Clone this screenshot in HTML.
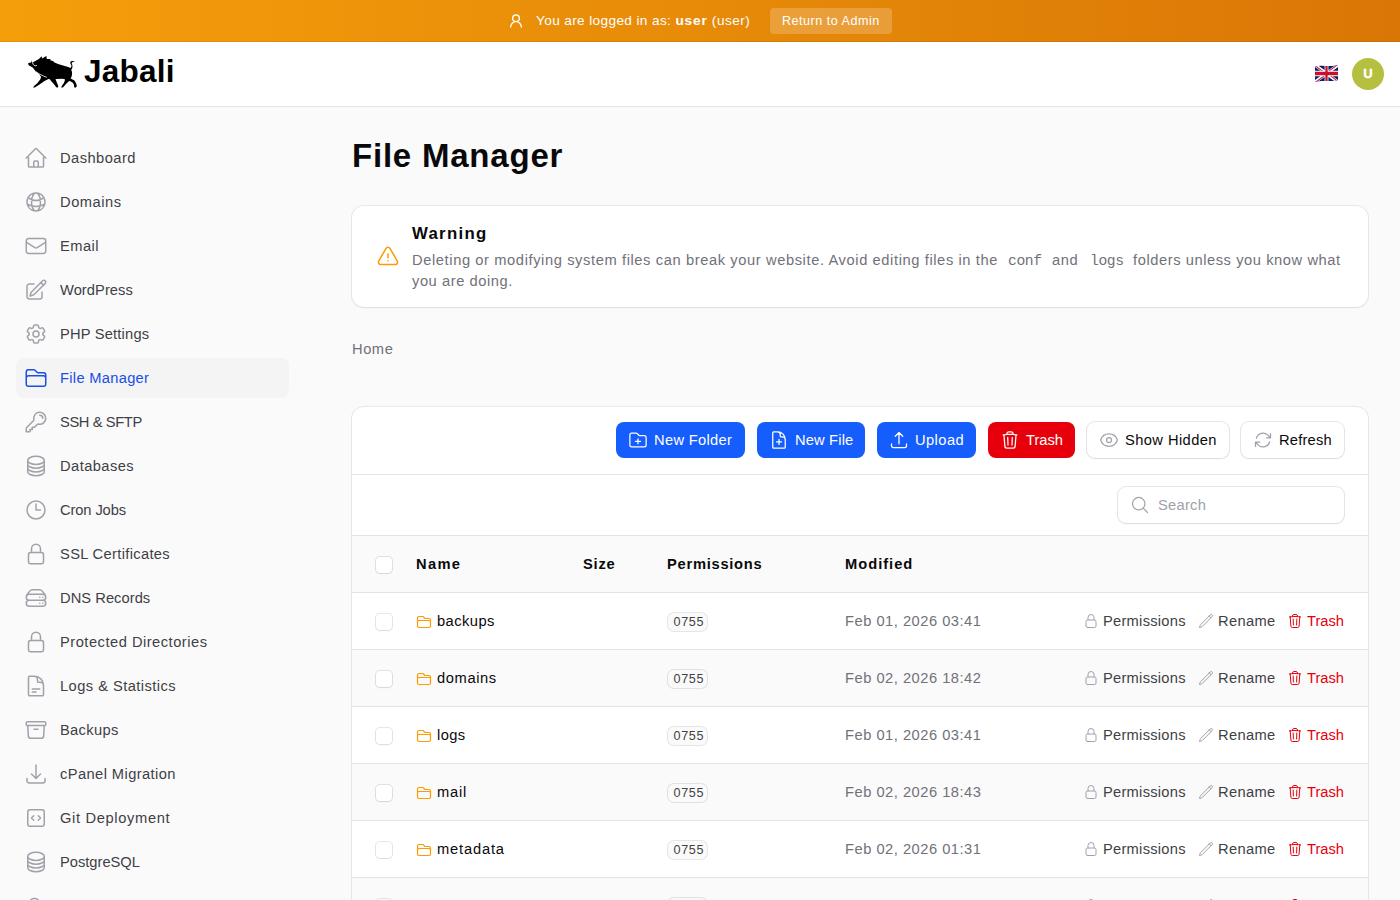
<!DOCTYPE html><html><head><meta charset="utf-8"><style>
html,body{margin:0;padding:0;width:1400px;height:900px;overflow:hidden;background:#fafafa;}
body{position:relative;font-family:"Liberation Sans",sans-serif;}
.fs{font-family:"Liberation Sans",sans-serif;}
.fm{font-family:"Liberation Mono",monospace;}
.t{position:absolute;white-space:pre;}
.ic{position:absolute;display:block;overflow:visible;}
.abs{position:absolute;box-sizing:border-box;}
</style></head><body>
<div class="abs" style="left:0;top:0;width:1400px;height:42px;background:linear-gradient(90deg,#f59e0b,#d97706);box-shadow:inset 0 -1px 0 rgba(0,0,0,.07)"></div>
<svg class="ic" style="left:508px;top:13px;width:16px;height:16px" viewBox="0 0 24 24" fill="none" stroke="#fff" stroke-width="2" stroke-linecap="round" stroke-linejoin="round"><path d="M20 21a8 8 0 0 0-16 0M17 8a5 5 0 1 1-10 0 5 5 0 0 1 10 0Z"/></svg>
<div class="t" style="left:536px;top:10px;line-height:20px;color:#fff;"><span class="fs" style="font-size:13.65px;letter-spacing:0.360px;">You are logged in as: </span><span class="fs" style="font-size:13.65px;letter-spacing:0.852px;font-weight:700;">user</span><span class="fs" style="font-size:13.65px;letter-spacing:0.460px;"> (user)</span></div>
<div class="abs" style="left:770px;top:8px;width:122px;height:26px;border-radius:4px;background:rgba(255,255,255,.2)"></div>
<div class="t" style="left:782px;top:10px;line-height:20px;color:#fff;"><span class="fs" style="font-size:12.60px;letter-spacing:0.496px;">Return to Admin</span></div>
<div class="abs" style="left:0;top:42px;width:1400px;height:65px;background:#fff;border-bottom:1px solid #e4e4e7"></div>
<svg class="ic" style="left:26px;top:52px;width:54px;height:40px" viewBox="0 0 54 40"><path d="M2.0,11.6 L2.7,10.9 L5.0,10.5 L5.3,8.2 L6.0,11.0 L7.1,10.2 L11.1,8.0 L12.9,7.1 L15.6,4.2 L16.0,6.5 L20.4,4.0 L20.8,7.0 L24.9,7.1 L23.8,8.0 L28,9.5 L27.5,10 L32,12 L42.2,15.1 L44.4,16.0 C45.5,15 45.8,14 45.0,12.5 C43.5,10.5 44.5,9 46.5,9 L48.9,9.3 L46.5,10.2 C45.3,10.3 45.8,11.5 46.3,13 C46.7,14.5 46.5,16.5 45.2,17.8 L46,20 C46.3,23 45.5,25.5 44.6,26.5 L48.5,28.5 L50.2,31.5 L50.9,34.2 L49.5,35.8 L48.2,35.2 L47.9,32.5 L46.5,30.5 L43.8,29 L42.5,29.5 L39.5,32.5 L37.2,35.2 L35.6,35.8 L35.4,34.6 L37.6,31.5 L38.8,28.8 L38.9,27.2 L36.5,26.7 L30.5,26.9 L29.5,27 L31,31 L32.4,34.2 L31.5,35.8 L30.3,35.3 L28.2,32.5 L25.6,29.5 L23.8,27.2 L22.4,27 L18.5,29 L13.5,32.5 L9.2,35.3 L7.3,35.8 L7.6,34.6 L11.5,31 L14.2,27.5 L15.1,24.9 L13.3,22.2 L9.8,19.6 L6.7,15.6 L2.7,13.3 Z" fill="#000"/><path d="M6.6,10.8 C7.3,13.4 8.8,14.3 10.8,13.4" stroke="#fff" stroke-width="0.9" fill="none"/><path d="M10.2,19.8 C13,22 16,23.5 20.8,25.4" stroke="#fff" stroke-width="0.8" fill="none"/></svg>
<div class="t" style="left:84px;top:53px;line-height:36px;color:#000;"><span class="fs" style="font-size:31.50px;letter-spacing:0.232px;font-weight:700;">Jabali</span></div>
<svg class="ic" style="left:1315px;top:65px;width:23px;height:17px" viewBox="0 0 60 30" preserveAspectRatio="none">
<clipPath id="fc"><path d="M0,3 C18,-1.5 38,4.5 60,0 L60,26.5 C40,31 22,25.5 0,30 Z"/></clipPath><clipPath id="ft"><path d="M30,15 h30 v15 z v15 h-30 z h-30 v-15 z v-15 h30 z"/></clipPath>
<g clip-path="url(#fc)"><path d="M0,0 v30 h60 v-30 z" fill="#012169"/><path d="M0,0 L60,30 M60,0 L0,30" stroke="#fff" stroke-width="6"/>
<path d="M0,0 L60,30 M60,0 L0,30" clip-path="url(#ft)" stroke="#C8102E" stroke-width="4"/><path d="M30,0 v30 M0,15 h60" stroke="#fff" stroke-width="10"/>
<path d="M30,0 v30 M0,15 h60" stroke="#C8102E" stroke-width="6"/></g></svg>
<div class="abs" style="left:1352px;top:58px;width:32px;height:32px;border-radius:50%;background:#b5bf40"></div>
<div class="t" style="left:1352px;top:63px;line-height:20px;color:#fff;width:32px;text-align:center"><span class="fs" style="font-size:13.00px;letter-spacing:0.359px;font-weight:700;-webkit-text-stroke:0.4px #fff;letter-spacing:0">U</span></div>
<svg class="ic" style="left:24px;top:146px;width:24px;height:24px" viewBox="0 0 24 24" fill="none" stroke="#a1a1aa" stroke-width="1.5" stroke-linecap="round" stroke-linejoin="round"><path d="m2.25 12 8.954-8.955c.44-.439 1.152-.439 1.591 0L21.75 12M4.5 9.75v10.125c0 .621.504 1.125 1.125 1.125H9.75v-4.875c0-.621.504-1.125 1.125-1.125h2.25c.621 0 1.125.504 1.125 1.125V21h4.125c.621 0 1.125-.504 1.125-1.125V9.75M8.25 21h8.25"/></svg>
<div class="t" style="left:60px;top:148px;line-height:20px;color:#3f3f46;"><span class="fs" style="font-size:14.70px;letter-spacing:0.457px;">Dashboard</span></div>
<svg class="ic" style="left:24px;top:190px;width:24px;height:24px" viewBox="0 0 24 24" fill="none" stroke="#a1a1aa" stroke-width="1.5" stroke-linecap="round" stroke-linejoin="round"><path d="M12 21a9.004 9.004 0 0 0 8.716-6.747M12 21a9.004 9.004 0 0 1-8.716-6.747M12 21c2.485 0 4.5-4.03 4.5-9S14.485 3 12 3m0 18c-2.485 0-4.5-4.03-4.5-9S9.515 3 12 3m0 0a8.997 8.997 0 0 1 7.843 4.582M12 3a8.997 8.997 0 0 0-7.843 4.582m15.686 0A11.953 11.953 0 0 1 12 10.5c-2.998 0-5.74-1.1-7.843-2.918m15.686 0A8.959 8.959 0 0 1 21 12c0 .778-.099 1.533-.284 2.253m0 0A17.919 17.919 0 0 1 12 16.5c-3.162 0-6.133-.815-8.716-2.247m0 0A9.015 9.015 0 0 1 3 12c0-1.605.42-3.113 1.157-4.418"/></svg>
<div class="t" style="left:60px;top:192px;line-height:20px;color:#3f3f46;"><span class="fs" style="font-size:14.70px;letter-spacing:0.522px;">Domains</span></div>
<svg class="ic" style="left:24px;top:234px;width:24px;height:24px" viewBox="0 0 24 24" fill="none" stroke="#a1a1aa" stroke-width="1.5" stroke-linecap="round" stroke-linejoin="round"><path d="M21.75 6.75v10.5a2.25 2.25 0 0 1-2.25 2.25h-15a2.25 2.25 0 0 1-2.25-2.25V6.75m19.5 0A2.25 2.25 0 0 0 19.5 4.5h-15a2.25 2.25 0 0 0-2.25 2.25m19.5 0v.243a2.25 2.25 0 0 1-1.07 1.916l-7.5 4.615a2.25 2.25 0 0 1-2.36 0L3.32 8.91a2.25 2.25 0 0 1-1.07-1.916V6.75"/></svg>
<div class="t" style="left:60px;top:236px;line-height:20px;color:#3f3f46;"><span class="fs" style="font-size:14.70px;letter-spacing:0.422px;">Email</span></div>
<svg class="ic" style="left:24px;top:278px;width:24px;height:24px" viewBox="0 0 24 24" fill="none" stroke="#a1a1aa" stroke-width="1.5" stroke-linecap="round" stroke-linejoin="round"><path d="m16.862 4.487 1.687-1.688a1.875 1.875 0 1 1 2.652 2.652L10.582 16.07a4.5 4.5 0 0 1-1.897 1.13L6 18l.8-2.685a4.5 4.5 0 0 1 1.13-1.897l8.932-8.931Zm0 0L19.5 7.125M18 14v4.75A2.25 2.25 0 0 1 15.75 21H5.25A2.25 2.25 0 0 1 3 18.75V8.25A2.25 2.25 0 0 1 5.25 6H10"/></svg>
<div class="t" style="left:60px;top:280px;line-height:20px;color:#3f3f46;"><span class="fs" style="font-size:14.70px;letter-spacing:0.052px;">WordPress</span></div>
<svg class="ic" style="left:24px;top:322px;width:24px;height:24px" viewBox="0 0 24 24" fill="none" stroke="#a1a1aa" stroke-width="1.5" stroke-linecap="round" stroke-linejoin="round"><path d="M9.594 3.94c.09-.542.56-.94 1.11-.94h2.593c.55 0 1.02.398 1.11.94l.213 1.281c.063.374.313.686.645.87.074.04.147.083.22.127.325.196.72.257 1.075.124l1.217-.456a1.125 1.125 0 0 1 1.37.49l1.296 2.247a1.125 1.125 0 0 1-.26 1.431l-1.003.827c-.293.241-.438.613-.43.992a7.723 7.723 0 0 1 0 .255c-.008.378.137.75.43.991l1.004.827c.424.35.534.955.26 1.43l-1.298 2.247a1.125 1.125 0 0 1-1.369.491l-1.217-.456c-.355-.133-.75-.072-1.076.124a6.47 6.47 0 0 1-.22.128c-.331.183-.581.495-.644.869l-.213 1.281c-.09.543-.56.94-1.11.94h-2.594c-.55 0-1.019-.398-1.11-.94l-.213-1.281c-.062-.374-.312-.686-.644-.87a6.52 6.52 0 0 1-.22-.127c-.325-.196-.72-.257-1.076-.124l-1.217.456a1.125 1.125 0 0 1-1.369-.49l-1.297-2.247a1.125 1.125 0 0 1 .26-1.431l1.004-.827c.292-.24.437-.613.43-.991a6.932 6.932 0 0 1 0-.255c.007-.38-.138-.751-.43-.992l-1.004-.827a1.125 1.125 0 0 1-.26-1.43l1.297-2.247a1.125 1.125 0 0 1 1.37-.491l1.216.456c.356.133.751.072 1.076-.124.072-.044.146-.086.22-.128.332-.183.582-.495.644-.869l.214-1.28ZM15 12a3 3 0 1 1-6 0 3 3 0 0 1 6 0Z"/></svg>
<div class="t" style="left:60px;top:324px;line-height:20px;color:#3f3f46;"><span class="fs" style="font-size:14.70px;letter-spacing:0.184px;">PHP Settings</span></div>
<div class="abs" style="left:16px;top:358px;width:273px;height:40px;border-radius:8px;background:#f4f4f5"></div>
<svg class="ic" style="left:24px;top:366px;width:24px;height:24px" viewBox="0 0 24 24" fill="none" stroke="#1a4fe6" stroke-width="1.5" stroke-linecap="round" stroke-linejoin="round"><path d="M2.25 12.75V12A2.25 2.25 0 0 1 4.5 9.75h15A2.25 2.25 0 0 1 21.75 12v.75m-8.69-6.44-2.12-2.12a1.5 1.5 0 0 0-1.061-.44H4.5A2.25 2.25 0 0 0 2.25 6v12a2.25 2.25 0 0 0 2.25 2.25h15A2.25 2.25 0 0 0 21.75 18V9a2.25 2.25 0 0 0-2.25-2.25h-5.379a1.5 1.5 0 0 1-1.06-.44Z"/></svg>
<div class="t" style="left:60px;top:368px;line-height:20px;color:#1a4fe6;"><span class="fs" style="font-size:14.70px;letter-spacing:0.294px;">File Manager</span></div>
<svg class="ic" style="left:24px;top:410px;width:24px;height:24px" viewBox="0 0 24 24" fill="none" stroke="#a1a1aa" stroke-width="1.5" stroke-linecap="round" stroke-linejoin="round"><path d="M15.75 5.25a3 3 0 0 1 3 3m3 0a6 6 0 0 1-7.029 5.912c-.563-.097-1.159.026-1.563.43L10.5 17.25H8.25v2.25H6v2.25H2.25v-2.818c0-.597.237-1.17.659-1.591l6.499-6.499c.404-.404.527-1 .43-1.563A6 6 0 1 1 21.75 8.25Z"/></svg>
<div class="t" style="left:60px;top:412px;line-height:20px;color:#3f3f46;"><span class="fs" style="font-size:14.70px;letter-spacing:-0.389px;">SSH &amp; SFTP</span></div>
<svg class="ic" style="left:24px;top:454px;width:24px;height:24px" viewBox="0 0 24 24" fill="none" stroke="#a1a1aa" stroke-width="1.5" stroke-linecap="round" stroke-linejoin="round"><path d="M20.25 6.375c0 2.278-3.694 4.125-8.25 4.125S3.75 8.653 3.75 6.375m16.5 0c0-2.278-3.694-4.125-8.25-4.125S3.75 4.097 3.75 6.375m16.5 0v11.25c0 2.278-3.694 4.125-8.25 4.125s-8.25-1.847-8.25-4.125V6.375m16.5 0v3.75m-16.5-3.75v3.75m16.5 0v3.75C20.25 16.153 16.556 18 12 18s-8.25-1.847-8.25-4.125v-3.75m16.5 0c0 2.278-3.694 4.125-8.25 4.125s-8.25-1.847-8.25-4.125"/></svg>
<div class="t" style="left:60px;top:456px;line-height:20px;color:#3f3f46;"><span class="fs" style="font-size:14.70px;letter-spacing:0.432px;">Databases</span></div>
<svg class="ic" style="left:24px;top:498px;width:24px;height:24px" viewBox="0 0 24 24" fill="none" stroke="#a1a1aa" stroke-width="1.5" stroke-linecap="round" stroke-linejoin="round"><path d="M12 6v6h4.5m4.5 0a9 9 0 1 1-18 0 9 9 0 0 1 18 0Z"/></svg>
<div class="t" style="left:60px;top:500px;line-height:20px;color:#3f3f46;"><span class="fs" style="font-size:14.70px;letter-spacing:-0.106px;">Cron Jobs</span></div>
<svg class="ic" style="left:24px;top:542px;width:24px;height:24px" viewBox="0 0 24 24" fill="none" stroke="#a1a1aa" stroke-width="1.5" stroke-linecap="round" stroke-linejoin="round"><path d="M16.5 10.5V6.75a4.5 4.5 0 1 0-9 0v3.75m-.75 11.25h10.5a2.25 2.25 0 0 0 2.25-2.25v-6.75a2.25 2.25 0 0 0-2.25-2.25H6.75a2.25 2.25 0 0 0-2.25 2.25v6.75a2.25 2.25 0 0 0 2.25 2.25Z"/></svg>
<div class="t" style="left:60px;top:544px;line-height:20px;color:#3f3f46;"><span class="fs" style="font-size:14.70px;letter-spacing:0.330px;">SSL Certificates</span></div>
<svg class="ic" style="left:24px;top:586px;width:24px;height:24px" viewBox="0 0 24 24" fill="none" stroke="#a1a1aa" stroke-width="1.5" stroke-linecap="round" stroke-linejoin="round"><path d="M5.25 14.25h13.5m-13.5 0a3 3 0 0 1-3-3m3 3a3 3 0 1 0 0 6h13.5a3 3 0 1 0 0-6m-16.5-3a3 3 0 0 1 3-3h13.5a3 3 0 0 1 3 3m-19.5 0a4.5 4.5 0 0 1 .9-2.7L5.737 5.1a3.375 3.375 0 0 1 2.7-1.35h7.126c1.062 0 2.062.5 2.7 1.35l2.587 3.45a4.5 4.5 0 0 1 .9 2.7m0 0a3 3 0 0 1-3 3m0 3h.008v.008h-.008v-.008Zm0-6h.008v.008h-.008v-.008Zm-3 6h.008v.008h-.008v-.008Zm0-6h.008v.008h-.008v-.008Z"/></svg>
<div class="t" style="left:60px;top:588px;line-height:20px;color:#3f3f46;"><span class="fs" style="font-size:14.70px;letter-spacing:0.043px;">DNS Records</span></div>
<svg class="ic" style="left:24px;top:630px;width:24px;height:24px" viewBox="0 0 24 24" fill="none" stroke="#a1a1aa" stroke-width="1.5" stroke-linecap="round" stroke-linejoin="round"><path d="M16.5 10.5V6.75a4.5 4.5 0 1 0-9 0v3.75m-.75 11.25h10.5a2.25 2.25 0 0 0 2.25-2.25v-6.75a2.25 2.25 0 0 0-2.25-2.25H6.75a2.25 2.25 0 0 0-2.25 2.25v6.75a2.25 2.25 0 0 0 2.25 2.25Z"/></svg>
<div class="t" style="left:60px;top:632px;line-height:20px;color:#3f3f46;"><span class="fs" style="font-size:14.70px;letter-spacing:0.493px;">Protected Directories</span></div>
<svg class="ic" style="left:24px;top:674px;width:24px;height:24px" viewBox="0 0 24 24" fill="none" stroke="#a1a1aa" stroke-width="1.5" stroke-linecap="round" stroke-linejoin="round"><path d="M19.5 14.25v-2.625a3.375 3.375 0 0 0-3.375-3.375h-1.5A1.125 1.125 0 0 1 13.5 7.125v-1.5a3.375 3.375 0 0 0-3.375-3.375H8.25m0 12.75h7.5m-7.5 3H12M10.5 2.25H5.625c-.621 0-1.125.504-1.125 1.125v17.25c0 .621.504 1.125 1.125 1.125h12.75c.621 0 1.125-.504 1.125-1.125V11.25a9 9 0 0 0-9-9Z"/></svg>
<div class="t" style="left:60px;top:676px;line-height:20px;color:#3f3f46;"><span class="fs" style="font-size:14.70px;letter-spacing:0.444px;">Logs &amp; Statistics</span></div>
<svg class="ic" style="left:24px;top:718px;width:24px;height:24px" viewBox="0 0 24 24" fill="none" stroke="#a1a1aa" stroke-width="1.5" stroke-linecap="round" stroke-linejoin="round"><path d="m20.25 7.5-.625 10.632a2.25 2.25 0 0 1-2.247 2.118H6.622a2.25 2.25 0 0 1-2.247-2.118L3.75 7.5M10 11.25h4M3.375 7.5h17.25c.621 0 1.125-.504 1.125-1.125v-1.5c0-.621-.504-1.125-1.125-1.125H3.375c-.621 0-1.125.504-1.125 1.125v1.5c0 .621.504 1.125 1.125 1.125Z"/></svg>
<div class="t" style="left:60px;top:720px;line-height:20px;color:#3f3f46;"><span class="fs" style="font-size:14.70px;letter-spacing:0.326px;">Backups</span></div>
<svg class="ic" style="left:24px;top:762px;width:24px;height:24px" viewBox="0 0 24 24" fill="none" stroke="#a1a1aa" stroke-width="1.5" stroke-linecap="round" stroke-linejoin="round"><path d="M3 16.5v2.25A2.25 2.25 0 0 0 5.25 21h13.5A2.25 2.25 0 0 0 21 18.75V16.5M16.5 12 12 16.5m0 0L7.5 12m4.5 4.5V3"/></svg>
<div class="t" style="left:60px;top:764px;line-height:20px;color:#3f3f46;"><span class="fs" style="font-size:14.70px;letter-spacing:0.408px;">cPanel Migration</span></div>
<svg class="ic" style="left:24px;top:806px;width:24px;height:24px" viewBox="0 0 24 24" fill="none" stroke="#a1a1aa" stroke-width="1.5" stroke-linecap="round" stroke-linejoin="round"><path d="M14.25 9.75 16.5 12l-2.25 2.25m-4.5 0L7.5 12l2.25-2.25M6 20.25h12A2.25 2.25 0 0 0 20.25 18V6A2.25 2.25 0 0 0 18 3.75H6A2.25 2.25 0 0 0 3.75 6v12A2.25 2.25 0 0 0 6 20.25Z"/></svg>
<div class="t" style="left:60px;top:808px;line-height:20px;color:#3f3f46;"><span class="fs" style="font-size:14.70px;letter-spacing:0.648px;">Git Deployment</span></div>
<svg class="ic" style="left:24px;top:850px;width:24px;height:24px" viewBox="0 0 24 24" fill="none" stroke="#a1a1aa" stroke-width="1.5" stroke-linecap="round" stroke-linejoin="round"><path d="M20.25 6.375c0 2.278-3.694 4.125-8.25 4.125S3.75 8.653 3.75 6.375m16.5 0c0-2.278-3.694-4.125-8.25-4.125S3.75 4.097 3.75 6.375m16.5 0v11.25c0 2.278-3.694 4.125-8.25 4.125s-8.25-1.847-8.25-4.125V6.375m16.5 0v3.75m-16.5-3.75v3.75m16.5 0v3.75C20.25 16.153 16.556 18 12 18s-8.25-1.847-8.25-4.125v-3.75m16.5 0c0 2.278-3.694 4.125-8.25 4.125s-8.25-1.847-8.25-4.125"/></svg>
<div class="t" style="left:60px;top:852px;line-height:20px;color:#3f3f46;"><span class="fs" style="font-size:14.70px;letter-spacing:-0.006px;">PostgreSQL</span></div>
<svg class="ic" style="left:24px;top:894px;width:24px;height:24px" viewBox="0 0 24 24" fill="none" stroke="#a1a1aa" stroke-width="1.5" stroke-linecap="round" stroke-linejoin="round"><path d="M2.25 15a4.5 4.5 0 0 0 4.5 4.5H18a3.75 3.75 0 0 0 1.332-7.257 3 3 0 0 0-3.758-3.848 5.25 5.25 0 0 0-10.233 2.33A4.5 4.5 0 0 0 2.25 15Z"/></svg>
<div class="t" style="left:60px;top:896px;line-height:20px;color:#3f3f46;"><span class="fs" style="font-size:14.70px;letter-spacing:0.322px;">Cloud</span></div>
<div class="t" style="left:352px;top:138px;line-height:36px;color:#09090b;"><span class="fs" style="font-size:33.00px;letter-spacing:0.786px;font-weight:700;">File Manager</span></div>
<div class="abs" style="left:352px;top:206px;width:1016px;height:101px;background:#fff;border-radius:12px;box-shadow:0 0 0 1px rgba(9,9,11,.07),0 1px 2px rgba(0,0,0,.05)"></div>
<svg class="ic" style="left:376px;top:245px;width:24px;height:24px" viewBox="0 0 24 24" fill="none" stroke="#fe9a00" stroke-width="1.5" stroke-linecap="round" stroke-linejoin="round"><path d="M12 9v3.75m-9.303 3.376c-.866 1.5.217 3.374 1.948 3.374h14.71c1.73 0 2.813-1.874 1.948-3.374L13.949 3.378c-.866-1.5-3.032-1.5-3.898 0L2.697 16.126ZM12 15.75h.007v.008H12v-.008Z"/></svg>
<div class="t" style="left:412px;top:222px;line-height:24px;color:#09090b;"><span class="fs" style="font-size:16.80px;letter-spacing:1.283px;font-weight:700;">Warning</span></div>
<div class="t" style="left:412px;top:249px;line-height:21px;color:#71717a;"><span class="fs" style="font-size:14.70px;letter-spacing:0.597px;">Deleting or modifying system files can break your website. Avoid editing files in the </span></div>
<div class="t" style="left:1008px;top:249px;line-height:21px;color:#71717a;"><span class="fm" style="font-size:14.70px;letter-spacing:-0.387px;">conf</span></div>
<div class="t" style="left:1052px;top:249px;line-height:21px;color:#71717a;"><span class="fs" style="font-size:14.70px;letter-spacing:0.609px;">and</span></div>
<div class="t" style="left:1090px;top:249px;line-height:21px;color:#71717a;"><span class="fm" style="font-size:14.70px;letter-spacing:-0.387px;">logs</span></div>
<div class="t" style="left:1133px;top:249px;line-height:21px;color:#71717a;"><span class="fs" style="font-size:14.70px;letter-spacing:0.565px;">folders unless you know what</span></div>
<div class="t" style="left:412px;top:270px;line-height:21px;color:#71717a;"><span class="fs" style="font-size:14.70px;letter-spacing:0.552px;">you are doing.</span></div>
<div class="t" style="left:352px;top:339px;line-height:20px;color:#71717a;"><span class="fs" style="font-size:14.70px;letter-spacing:0.539px;">Home</span></div>
<div class="abs" style="left:352px;top:407px;width:1016px;height:600px;background:#fff;border-radius:12px;box-shadow:0 0 0 1px rgba(9,9,11,.07),0 1px 2px rgba(0,0,0,.05);overflow:hidden">
</div>
<div class="abs" style="left:352px;top:474px;width:1016px;height:1px;background:#e4e4e7"></div>
<div class="abs" style="left:352px;top:535px;width:1016px;height:1px;background:#e4e4e7"></div>
<div class="abs" style="left:616px;top:422px;width:129px;height:36px;border-radius:8px;background:#155dfc;"></div>
<svg class="ic" style="left:628px;top:430px;width:20px;height:20px" viewBox="0 0 24 24" fill="none" stroke="#fff" stroke-width="1.5" stroke-linecap="round" stroke-linejoin="round"><path d="M12 10.5v6m3-3H9m4.06-7.19-2.12-2.12a1.5 1.5 0 0 0-1.061-.44H4.5A2.25 2.25 0 0 0 2.25 6v12a2.25 2.25 0 0 0 2.25 2.25h15A2.25 2.25 0 0 0 21.75 18V9a2.25 2.25 0 0 0-2.25-2.25h-5.379a1.5 1.5 0 0 1-1.06-.44Z"/></svg>
<div class="t" style="left:654px;top:430px;line-height:20px;color:#fff;"><span class="fs" style="font-size:14.70px;letter-spacing:0.316px;">New Folder</span></div>
<div class="abs" style="left:757px;top:422px;width:108px;height:36px;border-radius:8px;background:#155dfc;"></div>
<svg class="ic" style="left:769px;top:430px;width:20px;height:20px" viewBox="0 0 24 24" fill="none" stroke="#fff" stroke-width="1.5" stroke-linecap="round" stroke-linejoin="round"><path d="M19.5 14.25v-2.625a3.375 3.375 0 0 0-3.375-3.375h-1.5A1.125 1.125 0 0 1 13.5 7.125v-1.5a3.375 3.375 0 0 0-3.375-3.375H8.25m3.75 9v6m3-3H9m1.5-12H5.625c-.621 0-1.125.504-1.125 1.125v17.25c0 .621.504 1.125 1.125 1.125h12.75c.621 0 1.125-.504 1.125-1.125V11.25a9 9 0 0 0-9-9Z"/></svg>
<div class="t" style="left:795px;top:430px;line-height:20px;color:#fff;"><span class="fs" style="font-size:14.70px;letter-spacing:0.160px;">New File</span></div>
<div class="abs" style="left:877px;top:422px;width:99px;height:36px;border-radius:8px;background:#155dfc;"></div>
<svg class="ic" style="left:889px;top:430px;width:20px;height:20px" viewBox="0 0 24 24" fill="none" stroke="#fff" stroke-width="1.5" stroke-linecap="round" stroke-linejoin="round"><path d="M3 16.5v2.25A2.25 2.25 0 0 0 5.25 21h13.5A2.25 2.25 0 0 0 21 18.75V16.5m-13.5-9L12 3m0 0 4.5 4.5M12 3v13.5"/></svg>
<div class="t" style="left:915px;top:430px;line-height:20px;color:#fff;"><span class="fs" style="font-size:14.70px;letter-spacing:0.419px;">Upload</span></div>
<div class="abs" style="left:988px;top:422px;width:87px;height:36px;border-radius:8px;background:#e7000b;"></div>
<svg class="ic" style="left:1000px;top:430px;width:20px;height:20px" viewBox="0 0 24 24" fill="none" stroke="#fff" stroke-width="1.5" stroke-linecap="round" stroke-linejoin="round"><path d="m14.74 9-.346 9m-4.788 0L9.26 9m9.968-3.21c.342.052.682.107 1.022.166m-1.022-.165L18.16 19.673a2.25 2.25 0 0 1-2.244 2.077H8.084a2.25 2.25 0 0 1-2.244-2.077L4.772 5.79m14.456 0a48.108 48.108 0 0 0-3.478-.397m-12 .562c.34-.059.68-.114 1.022-.165m0 0a48.11 48.11 0 0 1 3.478-.397m7.5 0v-.916c0-1.18-.91-2.164-2.09-2.201a51.964 51.964 0 0 0-3.32 0c-1.18.037-2.09 1.022-2.09 2.201v.916m7.5 0a48.667 48.667 0 0 0-7.5 0"/></svg>
<div class="t" style="left:1026px;top:430px;line-height:20px;color:#fff;"><span class="fs" style="font-size:14.70px;letter-spacing:0.000px;">Trash</span></div>
<div class="abs" style="left:1087px;top:422px;width:142px;height:36px;border-radius:8px;background:#fff;box-shadow:0 0 0 1px rgba(9,9,11,.1),0 1px 2px rgba(0,0,0,.05);"></div>
<svg class="ic" style="left:1099px;top:430px;width:20px;height:20px" viewBox="0 0 24 24" fill="none" stroke="#a1a1aa" stroke-width="1.5" stroke-linecap="round" stroke-linejoin="round"><path d="M2.036 12.322a1.012 1.012 0 0 1 0-.639C3.423 7.51 7.36 4.5 12 4.5c4.638 0 8.573 3.007 9.963 7.178.07.207.07.431 0 .639C20.577 16.49 16.64 19.5 12 19.5c-4.638 0-8.573-3.007-9.963-7.178ZM15 12a3 3 0 1 1-6 0 3 3 0 0 1 6 0Z"/></svg>
<div class="t" style="left:1125px;top:430px;line-height:20px;color:#09090b;"><span class="fs" style="font-size:14.70px;letter-spacing:0.412px;">Show Hidden</span></div>
<div class="abs" style="left:1241px;top:422px;width:103px;height:36px;border-radius:8px;background:#fff;box-shadow:0 0 0 1px rgba(9,9,11,.1),0 1px 2px rgba(0,0,0,.05);"></div>
<svg class="ic" style="left:1253px;top:430px;width:20px;height:20px" viewBox="0 0 24 24" fill="none" stroke="#a1a1aa" stroke-width="1.5" stroke-linecap="round" stroke-linejoin="round"><path d="M16.023 9.348h4.992v-.001M2.985 19.644v-4.992m0 0h4.992m-4.993 0 3.181 3.183a8.25 8.25 0 0 0 13.803-3.7M4.031 9.865a8.25 8.25 0 0 1 13.803-3.7l3.181 3.182m0-4.991v4.99"/></svg>
<div class="t" style="left:1279px;top:430px;line-height:20px;color:#09090b;"><span class="fs" style="font-size:14.70px;letter-spacing:0.205px;">Refresh</span></div>
<div class="abs" style="left:1118px;top:487px;width:226px;height:36px;border-radius:8px;background:#fff;box-shadow:0 0 0 1px rgba(9,9,11,.1),0 1px 2px rgba(0,0,0,.05)"></div>
<svg class="ic" style="left:1130px;top:495px;width:20px;height:20px" viewBox="0 0 24 24" fill="none" stroke="#a1a1aa" stroke-width="1.5" stroke-linecap="round" stroke-linejoin="round"><path d="m21 21-5.197-5.197m0 0A7.5 7.5 0 1 0 5.196 5.196a7.5 7.5 0 0 0 10.607 10.607Z"/></svg>
<div class="t" style="left:1158px;top:495px;line-height:20px;color:#a1a1aa;"><span class="fs" style="font-size:14.70px;letter-spacing:0.260px;">Search</span></div>
<div class="abs" style="left:352px;top:536px;width:1016px;height:56px;background:#fafafa"></div>
<div class="abs" style="left:376px;top:557px;width:16px;height:16px;border-radius:4px;background:#fff;box-shadow:0 0 0 1px rgba(9,9,11,.1),0 1px 2px rgba(0,0,0,.05)"></div>
<div class="t" style="left:416px;top:554px;line-height:20px;color:#09090b;"><span class="fs" style="font-size:14.70px;letter-spacing:1.309px;font-weight:700;">Name</span></div>
<div class="t" style="left:583px;top:554px;line-height:20px;color:#09090b;"><span class="fs" style="font-size:14.70px;letter-spacing:0.785px;font-weight:700;">Size</span></div>
<div class="t" style="left:667px;top:554px;line-height:20px;color:#09090b;"><span class="fs" style="font-size:14.70px;letter-spacing:0.734px;font-weight:700;">Permissions</span></div>
<div class="t" style="left:845px;top:554px;line-height:20px;color:#09090b;"><span class="fs" style="font-size:14.70px;letter-spacing:0.986px;font-weight:700;">Modified</span></div>
<div class="abs" style="left:352px;top:592px;width:1016px;height:1px;background:#e4e4e7"></div>
<div class="abs" style="left:376px;top:614px;width:16px;height:16px;border-radius:4px;background:#fff;box-shadow:0 0 0 1px rgba(9,9,11,.1),0 1px 2px rgba(0,0,0,.05)"></div>
<svg class="ic" style="left:416px;top:614px;width:16px;height:16px" viewBox="0 0 24 24" fill="none" stroke="#fe9a00" stroke-width="1.8" stroke-linecap="round" stroke-linejoin="round"><path d="M2.25 12.75V12A2.25 2.25 0 0 1 4.5 9.75h15A2.25 2.25 0 0 1 21.75 12v.75m-8.69-6.44-2.12-2.12a1.5 1.5 0 0 0-1.061-.44H4.5A2.25 2.25 0 0 0 2.25 6v12a2.25 2.25 0 0 0 2.25 2.25h15A2.25 2.25 0 0 0 21.75 18V9a2.25 2.25 0 0 0-2.25-2.25h-5.379a1.5 1.5 0 0 1-1.06-.44Z"/></svg>
<div class="t" style="left:437px;top:611px;line-height:20px;color:#09090b;"><span class="fs" style="font-size:14.70px;letter-spacing:0.455px;">backups</span></div>
<div class="abs" style="left:668px;top:613px;width:39px;height:18px;border-radius:6px;background:#fafafa;box-shadow:0 0 0 1px rgba(9,9,11,.1)"></div>
<div class="t" style="left:673.5px;top:611px;line-height:20px;color:#3f3f46;"><span class="fs" style="font-size:12.60px;letter-spacing:0.629px;">0755</span></div>
<div class="t" style="left:845px;top:611px;line-height:20px;color:#71717a;"><span class="fs" style="font-size:14.70px;letter-spacing:0.499px;">Feb 01, 2026 03:41</span></div>
<svg class="ic" style="left:1083px;top:613px;width:16px;height:16px" viewBox="0 0 24 24" fill="none" stroke="#a1a1aa" stroke-width="1.5" stroke-linecap="round" stroke-linejoin="round"><path d="M16.5 10.5V6.75a4.5 4.5 0 1 0-9 0v3.75m-.75 11.25h10.5a2.25 2.25 0 0 0 2.25-2.25v-6.75a2.25 2.25 0 0 0-2.25-2.25H6.75a2.25 2.25 0 0 0-2.25 2.25v6.75a2.25 2.25 0 0 0 2.25 2.25Z"/></svg>
<div class="t" style="left:1103px;top:611px;line-height:20px;color:#3f3f46;"><span class="fs" style="font-size:14.70px;letter-spacing:0.256px;">Permissions</span></div>
<svg class="ic" style="left:1198px;top:613px;width:16px;height:16px" viewBox="0 0 24 24" fill="none" stroke="#a1a1aa" stroke-width="1.5" stroke-linecap="round" stroke-linejoin="round"><path d="m16.862 4.487 1.687-1.688a1.875 1.875 0 1 1 2.652 2.652L6.832 19.82a4.5 4.5 0 0 1-1.897 1.13l-2.685.8.8-2.685a4.5 4.5 0 0 1 1.13-1.897L16.863 4.487Zm0 0L19.5 7.125"/></svg>
<div class="t" style="left:1218px;top:611px;line-height:20px;color:#3f3f46;"><span class="fs" style="font-size:14.70px;letter-spacing:0.318px;">Rename</span></div>
<svg class="ic" style="left:1287px;top:613px;width:16px;height:16px" viewBox="0 0 24 24" fill="none" stroke="#e7000b" stroke-width="1.5" stroke-linecap="round" stroke-linejoin="round"><path d="m14.74 9-.346 9m-4.788 0L9.26 9m9.968-3.21c.342.052.682.107 1.022.166m-1.022-.165L18.16 19.673a2.25 2.25 0 0 1-2.244 2.077H8.084a2.25 2.25 0 0 1-2.244-2.077L4.772 5.79m14.456 0a48.108 48.108 0 0 0-3.478-.397m-12 .562c.34-.059.68-.114 1.022-.165m0 0a48.11 48.11 0 0 1 3.478-.397m7.5 0v-.916c0-1.18-.91-2.164-2.09-2.201a51.964 51.964 0 0 0-3.32 0c-1.18.037-2.09 1.022-2.09 2.201v.916m7.5 0a48.667 48.667 0 0 0-7.5 0"/></svg>
<div class="t" style="left:1307px;top:611px;line-height:20px;color:#e7000b;"><span class="fs" style="font-size:14.70px;letter-spacing:0.000px;">Trash</span></div>
<div class="abs" style="left:352px;top:649px;width:1016px;height:1px;background:#e4e4e7"></div>
<div class="abs" style="left:352px;top:650px;width:1016px;height:56px;background:#fafafa"></div>
<div class="abs" style="left:376px;top:671px;width:16px;height:16px;border-radius:4px;background:#fff;box-shadow:0 0 0 1px rgba(9,9,11,.1),0 1px 2px rgba(0,0,0,.05)"></div>
<svg class="ic" style="left:416px;top:671px;width:16px;height:16px" viewBox="0 0 24 24" fill="none" stroke="#fe9a00" stroke-width="1.8" stroke-linecap="round" stroke-linejoin="round"><path d="M2.25 12.75V12A2.25 2.25 0 0 1 4.5 9.75h15A2.25 2.25 0 0 1 21.75 12v.75m-8.69-6.44-2.12-2.12a1.5 1.5 0 0 0-1.061-.44H4.5A2.25 2.25 0 0 0 2.25 6v12a2.25 2.25 0 0 0 2.25 2.25h15A2.25 2.25 0 0 0 21.75 18V9a2.25 2.25 0 0 0-2.25-2.25h-5.379a1.5 1.5 0 0 1-1.06-.44Z"/></svg>
<div class="t" style="left:437px;top:668px;line-height:20px;color:#09090b;"><span class="fs" style="font-size:14.70px;letter-spacing:0.603px;">domains</span></div>
<div class="abs" style="left:668px;top:670px;width:39px;height:18px;border-radius:6px;background:#fafafa;box-shadow:0 0 0 1px rgba(9,9,11,.1)"></div>
<div class="t" style="left:673.5px;top:668px;line-height:20px;color:#3f3f46;"><span class="fs" style="font-size:12.60px;letter-spacing:0.629px;">0755</span></div>
<div class="t" style="left:845px;top:668px;line-height:20px;color:#71717a;"><span class="fs" style="font-size:14.70px;letter-spacing:0.499px;">Feb 02, 2026 18:42</span></div>
<svg class="ic" style="left:1083px;top:670px;width:16px;height:16px" viewBox="0 0 24 24" fill="none" stroke="#a1a1aa" stroke-width="1.5" stroke-linecap="round" stroke-linejoin="round"><path d="M16.5 10.5V6.75a4.5 4.5 0 1 0-9 0v3.75m-.75 11.25h10.5a2.25 2.25 0 0 0 2.25-2.25v-6.75a2.25 2.25 0 0 0-2.25-2.25H6.75a2.25 2.25 0 0 0-2.25 2.25v6.75a2.25 2.25 0 0 0 2.25 2.25Z"/></svg>
<div class="t" style="left:1103px;top:668px;line-height:20px;color:#3f3f46;"><span class="fs" style="font-size:14.70px;letter-spacing:0.256px;">Permissions</span></div>
<svg class="ic" style="left:1198px;top:670px;width:16px;height:16px" viewBox="0 0 24 24" fill="none" stroke="#a1a1aa" stroke-width="1.5" stroke-linecap="round" stroke-linejoin="round"><path d="m16.862 4.487 1.687-1.688a1.875 1.875 0 1 1 2.652 2.652L6.832 19.82a4.5 4.5 0 0 1-1.897 1.13l-2.685.8.8-2.685a4.5 4.5 0 0 1 1.13-1.897L16.863 4.487Zm0 0L19.5 7.125"/></svg>
<div class="t" style="left:1218px;top:668px;line-height:20px;color:#3f3f46;"><span class="fs" style="font-size:14.70px;letter-spacing:0.318px;">Rename</span></div>
<svg class="ic" style="left:1287px;top:670px;width:16px;height:16px" viewBox="0 0 24 24" fill="none" stroke="#e7000b" stroke-width="1.5" stroke-linecap="round" stroke-linejoin="round"><path d="m14.74 9-.346 9m-4.788 0L9.26 9m9.968-3.21c.342.052.682.107 1.022.166m-1.022-.165L18.16 19.673a2.25 2.25 0 0 1-2.244 2.077H8.084a2.25 2.25 0 0 1-2.244-2.077L4.772 5.79m14.456 0a48.108 48.108 0 0 0-3.478-.397m-12 .562c.34-.059.68-.114 1.022-.165m0 0a48.11 48.11 0 0 1 3.478-.397m7.5 0v-.916c0-1.18-.91-2.164-2.09-2.201a51.964 51.964 0 0 0-3.32 0c-1.18.037-2.09 1.022-2.09 2.201v.916m7.5 0a48.667 48.667 0 0 0-7.5 0"/></svg>
<div class="t" style="left:1307px;top:668px;line-height:20px;color:#e7000b;"><span class="fs" style="font-size:14.70px;letter-spacing:0.000px;">Trash</span></div>
<div class="abs" style="left:352px;top:706px;width:1016px;height:1px;background:#e4e4e7"></div>
<div class="abs" style="left:376px;top:728px;width:16px;height:16px;border-radius:4px;background:#fff;box-shadow:0 0 0 1px rgba(9,9,11,.1),0 1px 2px rgba(0,0,0,.05)"></div>
<svg class="ic" style="left:416px;top:728px;width:16px;height:16px" viewBox="0 0 24 24" fill="none" stroke="#fe9a00" stroke-width="1.8" stroke-linecap="round" stroke-linejoin="round"><path d="M2.25 12.75V12A2.25 2.25 0 0 1 4.5 9.75h15A2.25 2.25 0 0 1 21.75 12v.75m-8.69-6.44-2.12-2.12a1.5 1.5 0 0 0-1.061-.44H4.5A2.25 2.25 0 0 0 2.25 6v12a2.25 2.25 0 0 0 2.25 2.25h15A2.25 2.25 0 0 0 21.75 18V9a2.25 2.25 0 0 0-2.25-2.25h-5.379a1.5 1.5 0 0 1-1.06-.44Z"/></svg>
<div class="t" style="left:437px;top:725px;line-height:20px;color:#09090b;"><span class="fs" style="font-size:14.70px;letter-spacing:0.422px;">logs</span></div>
<div class="abs" style="left:668px;top:727px;width:39px;height:18px;border-radius:6px;background:#fafafa;box-shadow:0 0 0 1px rgba(9,9,11,.1)"></div>
<div class="t" style="left:673.5px;top:725px;line-height:20px;color:#3f3f46;"><span class="fs" style="font-size:12.60px;letter-spacing:0.629px;">0755</span></div>
<div class="t" style="left:845px;top:725px;line-height:20px;color:#71717a;"><span class="fs" style="font-size:14.70px;letter-spacing:0.499px;">Feb 01, 2026 03:41</span></div>
<svg class="ic" style="left:1083px;top:727px;width:16px;height:16px" viewBox="0 0 24 24" fill="none" stroke="#a1a1aa" stroke-width="1.5" stroke-linecap="round" stroke-linejoin="round"><path d="M16.5 10.5V6.75a4.5 4.5 0 1 0-9 0v3.75m-.75 11.25h10.5a2.25 2.25 0 0 0 2.25-2.25v-6.75a2.25 2.25 0 0 0-2.25-2.25H6.75a2.25 2.25 0 0 0-2.25 2.25v6.75a2.25 2.25 0 0 0 2.25 2.25Z"/></svg>
<div class="t" style="left:1103px;top:725px;line-height:20px;color:#3f3f46;"><span class="fs" style="font-size:14.70px;letter-spacing:0.256px;">Permissions</span></div>
<svg class="ic" style="left:1198px;top:727px;width:16px;height:16px" viewBox="0 0 24 24" fill="none" stroke="#a1a1aa" stroke-width="1.5" stroke-linecap="round" stroke-linejoin="round"><path d="m16.862 4.487 1.687-1.688a1.875 1.875 0 1 1 2.652 2.652L6.832 19.82a4.5 4.5 0 0 1-1.897 1.13l-2.685.8.8-2.685a4.5 4.5 0 0 1 1.13-1.897L16.863 4.487Zm0 0L19.5 7.125"/></svg>
<div class="t" style="left:1218px;top:725px;line-height:20px;color:#3f3f46;"><span class="fs" style="font-size:14.70px;letter-spacing:0.318px;">Rename</span></div>
<svg class="ic" style="left:1287px;top:727px;width:16px;height:16px" viewBox="0 0 24 24" fill="none" stroke="#e7000b" stroke-width="1.5" stroke-linecap="round" stroke-linejoin="round"><path d="m14.74 9-.346 9m-4.788 0L9.26 9m9.968-3.21c.342.052.682.107 1.022.166m-1.022-.165L18.16 19.673a2.25 2.25 0 0 1-2.244 2.077H8.084a2.25 2.25 0 0 1-2.244-2.077L4.772 5.79m14.456 0a48.108 48.108 0 0 0-3.478-.397m-12 .562c.34-.059.68-.114 1.022-.165m0 0a48.11 48.11 0 0 1 3.478-.397m7.5 0v-.916c0-1.18-.91-2.164-2.09-2.201a51.964 51.964 0 0 0-3.32 0c-1.18.037-2.09 1.022-2.09 2.201v.916m7.5 0a48.667 48.667 0 0 0-7.5 0"/></svg>
<div class="t" style="left:1307px;top:725px;line-height:20px;color:#e7000b;"><span class="fs" style="font-size:14.70px;letter-spacing:0.000px;">Trash</span></div>
<div class="abs" style="left:352px;top:763px;width:1016px;height:1px;background:#e4e4e7"></div>
<div class="abs" style="left:352px;top:764px;width:1016px;height:56px;background:#fafafa"></div>
<div class="abs" style="left:376px;top:785px;width:16px;height:16px;border-radius:4px;background:#fff;box-shadow:0 0 0 1px rgba(9,9,11,.1),0 1px 2px rgba(0,0,0,.05)"></div>
<svg class="ic" style="left:416px;top:785px;width:16px;height:16px" viewBox="0 0 24 24" fill="none" stroke="#fe9a00" stroke-width="1.8" stroke-linecap="round" stroke-linejoin="round"><path d="M2.25 12.75V12A2.25 2.25 0 0 1 4.5 9.75h15A2.25 2.25 0 0 1 21.75 12v.75m-8.69-6.44-2.12-2.12a1.5 1.5 0 0 0-1.061-.44H4.5A2.25 2.25 0 0 0 2.25 6v12a2.25 2.25 0 0 0 2.25 2.25h15A2.25 2.25 0 0 0 21.75 18V9a2.25 2.25 0 0 0-2.25-2.25h-5.379a1.5 1.5 0 0 1-1.06-.44Z"/></svg>
<div class="t" style="left:437px;top:782px;line-height:20px;color:#09090b;"><span class="fs" style="font-size:14.70px;letter-spacing:0.766px;">mail</span></div>
<div class="abs" style="left:668px;top:784px;width:39px;height:18px;border-radius:6px;background:#fafafa;box-shadow:0 0 0 1px rgba(9,9,11,.1)"></div>
<div class="t" style="left:673.5px;top:782px;line-height:20px;color:#3f3f46;"><span class="fs" style="font-size:12.60px;letter-spacing:0.629px;">0755</span></div>
<div class="t" style="left:845px;top:782px;line-height:20px;color:#71717a;"><span class="fs" style="font-size:14.70px;letter-spacing:0.499px;">Feb 02, 2026 18:43</span></div>
<svg class="ic" style="left:1083px;top:784px;width:16px;height:16px" viewBox="0 0 24 24" fill="none" stroke="#a1a1aa" stroke-width="1.5" stroke-linecap="round" stroke-linejoin="round"><path d="M16.5 10.5V6.75a4.5 4.5 0 1 0-9 0v3.75m-.75 11.25h10.5a2.25 2.25 0 0 0 2.25-2.25v-6.75a2.25 2.25 0 0 0-2.25-2.25H6.75a2.25 2.25 0 0 0-2.25 2.25v6.75a2.25 2.25 0 0 0 2.25 2.25Z"/></svg>
<div class="t" style="left:1103px;top:782px;line-height:20px;color:#3f3f46;"><span class="fs" style="font-size:14.70px;letter-spacing:0.256px;">Permissions</span></div>
<svg class="ic" style="left:1198px;top:784px;width:16px;height:16px" viewBox="0 0 24 24" fill="none" stroke="#a1a1aa" stroke-width="1.5" stroke-linecap="round" stroke-linejoin="round"><path d="m16.862 4.487 1.687-1.688a1.875 1.875 0 1 1 2.652 2.652L6.832 19.82a4.5 4.5 0 0 1-1.897 1.13l-2.685.8.8-2.685a4.5 4.5 0 0 1 1.13-1.897L16.863 4.487Zm0 0L19.5 7.125"/></svg>
<div class="t" style="left:1218px;top:782px;line-height:20px;color:#3f3f46;"><span class="fs" style="font-size:14.70px;letter-spacing:0.318px;">Rename</span></div>
<svg class="ic" style="left:1287px;top:784px;width:16px;height:16px" viewBox="0 0 24 24" fill="none" stroke="#e7000b" stroke-width="1.5" stroke-linecap="round" stroke-linejoin="round"><path d="m14.74 9-.346 9m-4.788 0L9.26 9m9.968-3.21c.342.052.682.107 1.022.166m-1.022-.165L18.16 19.673a2.25 2.25 0 0 1-2.244 2.077H8.084a2.25 2.25 0 0 1-2.244-2.077L4.772 5.79m14.456 0a48.108 48.108 0 0 0-3.478-.397m-12 .562c.34-.059.68-.114 1.022-.165m0 0a48.11 48.11 0 0 1 3.478-.397m7.5 0v-.916c0-1.18-.91-2.164-2.09-2.201a51.964 51.964 0 0 0-3.32 0c-1.18.037-2.09 1.022-2.09 2.201v.916m7.5 0a48.667 48.667 0 0 0-7.5 0"/></svg>
<div class="t" style="left:1307px;top:782px;line-height:20px;color:#e7000b;"><span class="fs" style="font-size:14.70px;letter-spacing:0.000px;">Trash</span></div>
<div class="abs" style="left:352px;top:820px;width:1016px;height:1px;background:#e4e4e7"></div>
<div class="abs" style="left:376px;top:842px;width:16px;height:16px;border-radius:4px;background:#fff;box-shadow:0 0 0 1px rgba(9,9,11,.1),0 1px 2px rgba(0,0,0,.05)"></div>
<svg class="ic" style="left:416px;top:842px;width:16px;height:16px" viewBox="0 0 24 24" fill="none" stroke="#fe9a00" stroke-width="1.8" stroke-linecap="round" stroke-linejoin="round"><path d="M2.25 12.75V12A2.25 2.25 0 0 1 4.5 9.75h15A2.25 2.25 0 0 1 21.75 12v.75m-8.69-6.44-2.12-2.12a1.5 1.5 0 0 0-1.061-.44H4.5A2.25 2.25 0 0 0 2.25 6v12a2.25 2.25 0 0 0 2.25 2.25h15A2.25 2.25 0 0 0 21.75 18V9a2.25 2.25 0 0 0-2.25-2.25h-5.379a1.5 1.5 0 0 1-1.06-.44Z"/></svg>
<div class="t" style="left:437px;top:839px;line-height:20px;color:#09090b;"><span class="fs" style="font-size:14.70px;letter-spacing:0.826px;">metadata</span></div>
<div class="abs" style="left:668px;top:841px;width:39px;height:18px;border-radius:6px;background:#fafafa;box-shadow:0 0 0 1px rgba(9,9,11,.1)"></div>
<div class="t" style="left:673.5px;top:839px;line-height:20px;color:#3f3f46;"><span class="fs" style="font-size:12.60px;letter-spacing:0.629px;">0755</span></div>
<div class="t" style="left:845px;top:839px;line-height:20px;color:#71717a;"><span class="fs" style="font-size:14.70px;letter-spacing:0.499px;">Feb 02, 2026 01:31</span></div>
<svg class="ic" style="left:1083px;top:841px;width:16px;height:16px" viewBox="0 0 24 24" fill="none" stroke="#a1a1aa" stroke-width="1.5" stroke-linecap="round" stroke-linejoin="round"><path d="M16.5 10.5V6.75a4.5 4.5 0 1 0-9 0v3.75m-.75 11.25h10.5a2.25 2.25 0 0 0 2.25-2.25v-6.75a2.25 2.25 0 0 0-2.25-2.25H6.75a2.25 2.25 0 0 0-2.25 2.25v6.75a2.25 2.25 0 0 0 2.25 2.25Z"/></svg>
<div class="t" style="left:1103px;top:839px;line-height:20px;color:#3f3f46;"><span class="fs" style="font-size:14.70px;letter-spacing:0.256px;">Permissions</span></div>
<svg class="ic" style="left:1198px;top:841px;width:16px;height:16px" viewBox="0 0 24 24" fill="none" stroke="#a1a1aa" stroke-width="1.5" stroke-linecap="round" stroke-linejoin="round"><path d="m16.862 4.487 1.687-1.688a1.875 1.875 0 1 1 2.652 2.652L6.832 19.82a4.5 4.5 0 0 1-1.897 1.13l-2.685.8.8-2.685a4.5 4.5 0 0 1 1.13-1.897L16.863 4.487Zm0 0L19.5 7.125"/></svg>
<div class="t" style="left:1218px;top:839px;line-height:20px;color:#3f3f46;"><span class="fs" style="font-size:14.70px;letter-spacing:0.318px;">Rename</span></div>
<svg class="ic" style="left:1287px;top:841px;width:16px;height:16px" viewBox="0 0 24 24" fill="none" stroke="#e7000b" stroke-width="1.5" stroke-linecap="round" stroke-linejoin="round"><path d="m14.74 9-.346 9m-4.788 0L9.26 9m9.968-3.21c.342.052.682.107 1.022.166m-1.022-.165L18.16 19.673a2.25 2.25 0 0 1-2.244 2.077H8.084a2.25 2.25 0 0 1-2.244-2.077L4.772 5.79m14.456 0a48.108 48.108 0 0 0-3.478-.397m-12 .562c.34-.059.68-.114 1.022-.165m0 0a48.11 48.11 0 0 1 3.478-.397m7.5 0v-.916c0-1.18-.91-2.164-2.09-2.201a51.964 51.964 0 0 0-3.32 0c-1.18.037-2.09 1.022-2.09 2.201v.916m7.5 0a48.667 48.667 0 0 0-7.5 0"/></svg>
<div class="t" style="left:1307px;top:839px;line-height:20px;color:#e7000b;"><span class="fs" style="font-size:14.70px;letter-spacing:0.000px;">Trash</span></div>
<div class="abs" style="left:352px;top:877px;width:1016px;height:1px;background:#e4e4e7"></div>
<div class="abs" style="left:352px;top:878px;width:1016px;height:56px;background:#fafafa"></div>
<div class="abs" style="left:376px;top:899px;width:16px;height:16px;border-radius:4px;background:#fff;box-shadow:0 0 0 1px rgba(9,9,11,.1),0 1px 2px rgba(0,0,0,.05)"></div>
<svg class="ic" style="left:416px;top:899px;width:16px;height:16px" viewBox="0 0 24 24" fill="none" stroke="#fe9a00" stroke-width="1.8" stroke-linecap="round" stroke-linejoin="round"><path d="M2.25 12.75V12A2.25 2.25 0 0 1 4.5 9.75h15A2.25 2.25 0 0 1 21.75 12v.75m-8.69-6.44-2.12-2.12a1.5 1.5 0 0 0-1.061-.44H4.5A2.25 2.25 0 0 0 2.25 6v12a2.25 2.25 0 0 0 2.25 2.25h15A2.25 2.25 0 0 0 21.75 18V9a2.25 2.25 0 0 0-2.25-2.25h-5.379a1.5 1.5 0 0 1-1.06-.44Z"/></svg>
<div class="abs" style="left:668px;top:898px;width:39px;height:18px;border-radius:6px;background:#fafafa;box-shadow:0 0 0 1px rgba(9,9,11,.1)"></div>
<div class="t" style="left:673.5px;top:896px;line-height:20px;color:#3f3f46;"><span class="fs" style="font-size:12.60px;letter-spacing:0.629px;">0755</span></div>
<svg class="ic" style="left:1083px;top:898px;width:16px;height:16px" viewBox="0 0 24 24" fill="none" stroke="#a1a1aa" stroke-width="1.5" stroke-linecap="round" stroke-linejoin="round"><path d="M16.5 10.5V6.75a4.5 4.5 0 1 0-9 0v3.75m-.75 11.25h10.5a2.25 2.25 0 0 0 2.25-2.25v-6.75a2.25 2.25 0 0 0-2.25-2.25H6.75a2.25 2.25 0 0 0-2.25 2.25v6.75a2.25 2.25 0 0 0 2.25 2.25Z"/></svg>
<div class="t" style="left:1103px;top:896px;line-height:20px;color:#3f3f46;"><span class="fs" style="font-size:14.70px;letter-spacing:0.256px;">Permissions</span></div>
<svg class="ic" style="left:1198px;top:898px;width:16px;height:16px" viewBox="0 0 24 24" fill="none" stroke="#a1a1aa" stroke-width="1.5" stroke-linecap="round" stroke-linejoin="round"><path d="m16.862 4.487 1.687-1.688a1.875 1.875 0 1 1 2.652 2.652L6.832 19.82a4.5 4.5 0 0 1-1.897 1.13l-2.685.8.8-2.685a4.5 4.5 0 0 1 1.13-1.897L16.863 4.487Zm0 0L19.5 7.125"/></svg>
<div class="t" style="left:1218px;top:896px;line-height:20px;color:#3f3f46;"><span class="fs" style="font-size:14.70px;letter-spacing:0.318px;">Rename</span></div>
<svg class="ic" style="left:1287px;top:898px;width:16px;height:16px" viewBox="0 0 24 24" fill="none" stroke="#e7000b" stroke-width="1.5" stroke-linecap="round" stroke-linejoin="round"><path d="m14.74 9-.346 9m-4.788 0L9.26 9m9.968-3.21c.342.052.682.107 1.022.166m-1.022-.165L18.16 19.673a2.25 2.25 0 0 1-2.244 2.077H8.084a2.25 2.25 0 0 1-2.244-2.077L4.772 5.79m14.456 0a48.108 48.108 0 0 0-3.478-.397m-12 .562c.34-.059.68-.114 1.022-.165m0 0a48.11 48.11 0 0 1 3.478-.397m7.5 0v-.916c0-1.18-.91-2.164-2.09-2.201a51.964 51.964 0 0 0-3.32 0c-1.18.037-2.09 1.022-2.09 2.201v.916m7.5 0a48.667 48.667 0 0 0-7.5 0"/></svg>
<div class="t" style="left:1307px;top:896px;line-height:20px;color:#e7000b;"><span class="fs" style="font-size:14.70px;letter-spacing:0.000px;">Trash</span></div>
</body></html>
